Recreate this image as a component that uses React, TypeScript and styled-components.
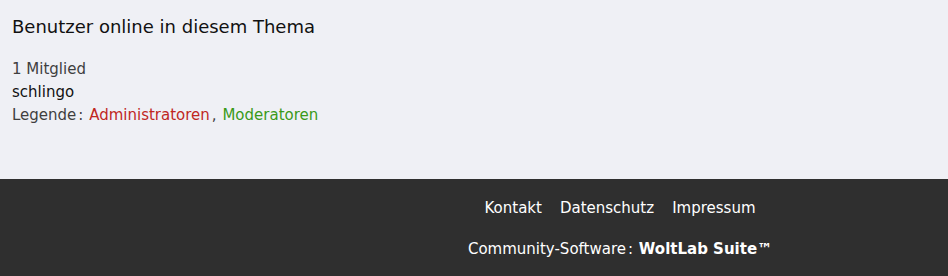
import React from "react";
import styled, { createGlobalStyle } from "styled-components";

const Global = createGlobalStyle`
  html, body { margin: 0; padding: 0; }
  body { background: #eff0f5; font-family: "DejaVu Sans", Verdana, sans-serif; }
`;

const Page = styled.div`
  display: flex;
  flex-direction: column;
  min-height: 276px;
`;

const Section = styled.section`
  background: #eff0f5;
  padding: 15px 12px 0;
  height: 179px;
  box-sizing: border-box;
`;

const Title = styled.h2`
  margin: 0 0 20px;
  font-size: 18px;
  font-weight: 400;
  line-height: 23px;
  color: #111;
`;

const Line = styled.div<{ $muted?: boolean }>`
  font-size: 15px;
  line-height: 23px;
  color: ${(p) => (p.$muted ? "#3f3f3f" : "#111")};
`;

const Group = styled.span<{ $color: string }>`
  color: ${(p) => p.$color};
`;

const Punct = styled.span`
  margin: 0 1px 0 2px;
`;

const Footer = styled.footer`
  background: #2f2f2f;
  color: #fff;
  flex: 1;
  display: flex;
  flex-direction: column;
  align-items: center;
  padding: 20px 0 0 292px;
  gap: 23px;
  font-size: 15px;
`;

const Links = styled.nav`
  display: flex;
  gap: 18px;
  line-height: 18px;
`;

const Link = styled.a`
  color: #fff;
  text-decoration: none;
`;

const Copyright = styled.div`
  line-height: 18px;
  color: #fff;
  b { font-weight: 700; }
`;

export default function App() {
  return (
    <Page>
      <Global />
      <Section>
        <Title>Benutzer online in diesem Thema</Title>
        <Line $muted>1 Mitglied</Line>
        <Line>schlingo</Line>
        <Line $muted>
          Legende<Punct>:</Punct> <Group $color="#c0271f">Administratoren</Group>
          <Punct>,</Punct> <Group $color="#3a9a1a">Moderatoren</Group>
        </Line>
      </Section>
      <Footer>
        <Links>
          <Link href="#">Kontakt</Link>
          <Link href="#">Datenschutz</Link>
          <Link href="#">Impressum</Link>
        </Links>
        <Copyright>
          Community-Software<Punct>:</Punct> <b>WoltLab Suite™</b>
        </Copyright>
      </Footer>
    </Page>
  );
}
